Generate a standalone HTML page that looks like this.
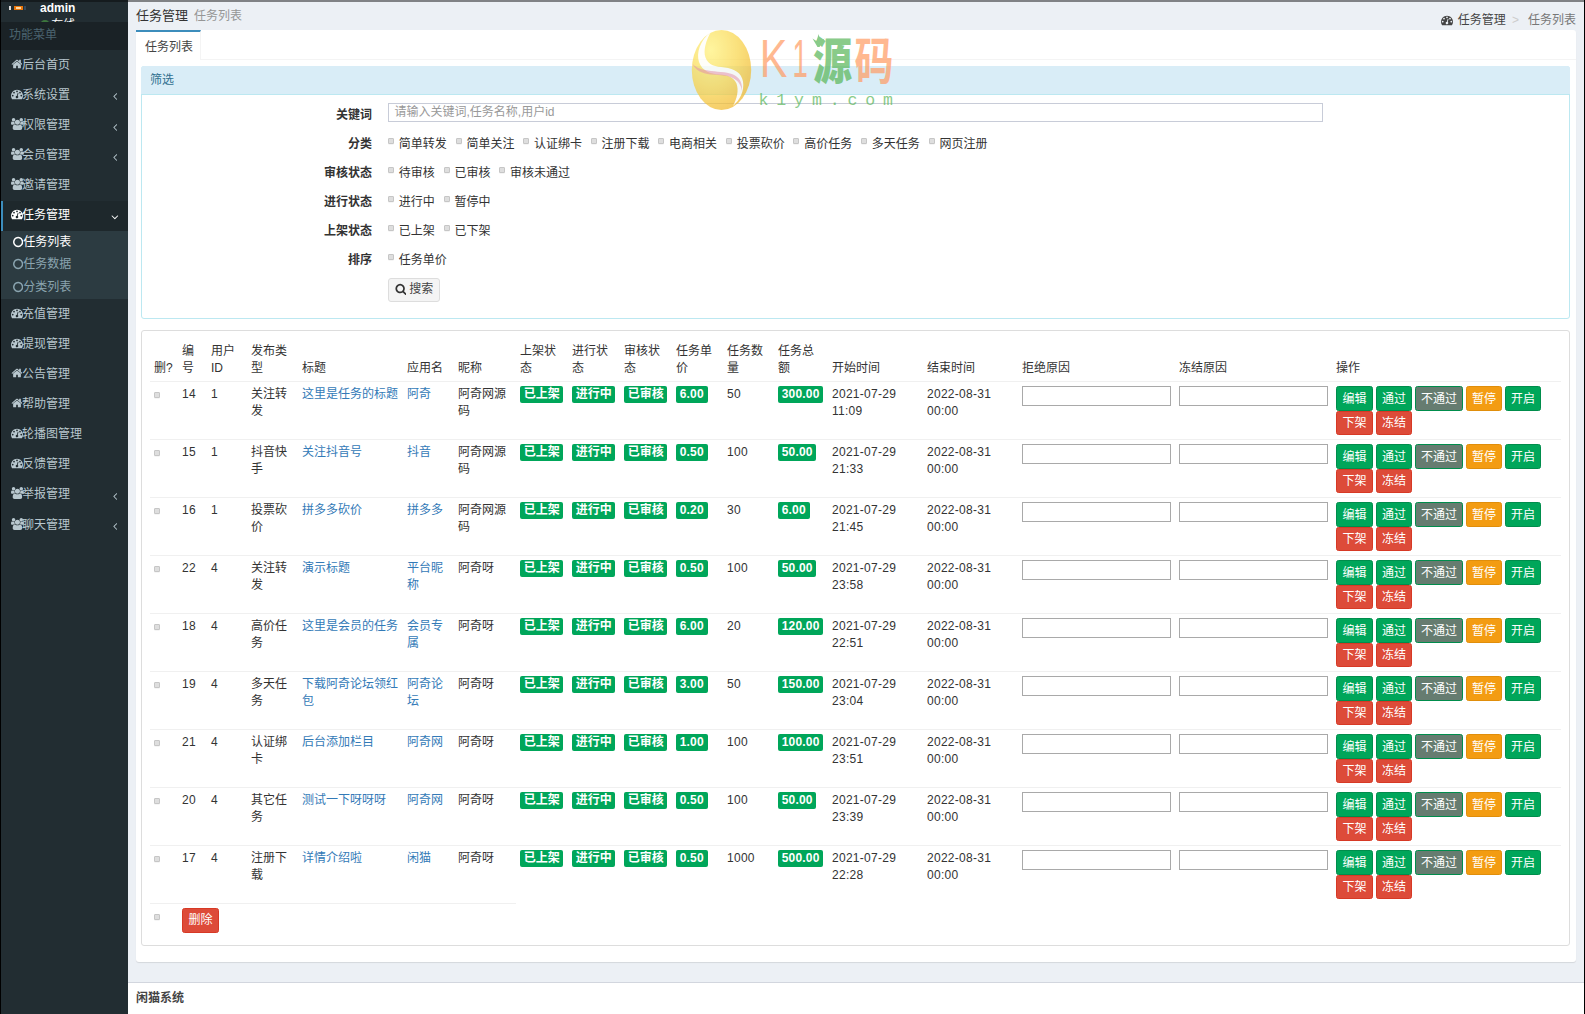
<!DOCTYPE html>
<html lang="zh-CN"><head><meta charset="utf-8"><title>任务列表</title>
<style>
*{box-sizing:border-box}
html,body{margin:0;padding:0}
body{width:1585px;height:1014px;overflow:hidden;position:relative;background:#ecf0f5;font-family:"Liberation Sans","Noto Sans CJK SC",sans-serif;font-size:12px;line-height:17px;color:#333}
a{color:#337ab7;text-decoration:none}
ul{list-style:none;margin:0;padding:0}
#topbar{position:absolute;left:0;top:0;width:1585px;height:2px;background:#808285;z-index:5}
#topbar i{display:block;width:128px;height:2px;background:#151b1e}
#edgeL{position:absolute;left:0;top:0;width:1px;height:1014px;background:#000;z-index:9}
#edgeR{position:absolute;left:1584px;top:0;width:1px;height:1014px;background:#000;z-index:9}
#side{position:absolute;left:0;top:0;width:128px;height:1014px;background:#222d32;overflow:hidden}
#user{position:absolute;left:0;top:0;width:128px;height:22px;overflow:hidden}
#user .nm{position:absolute;left:40px;top:1px;color:#fff;font-weight:bold;font-size:12px;line-height:15px}
#user .st{position:absolute;left:41px;top:17px;padding-left:10.300px;color:#fff;font-size:12px;line-height:17px;white-space:nowrap}
#user .st i{position:absolute;left:-1px;top:2.800px;width:10.300px;height:10.300px;border-radius:50%;background:#3c763d}
#user .av{position:absolute;left:9px;top:6px;width:18px;height:4px}
#mh{position:absolute;left:0;top:22px;width:128px;height:27.700px;background:#1a2226;color:#4b646f;padding:5px 0 0 9px;line-height:17px}
#menu{position:absolute;left:0;top:50.300px;width:128px}
#menu>li>a{display:block;height:30.140px;line-height:30px;color:#b8c7ce;padding-left:11px;position:relative;border-left:0 solid transparent;white-space:nowrap}
#menu>li>a span{position:relative;top:-0.500px}
#menu>li.act>a{height:30.140px}
.fa{height:1em;fill:currentColor;vertical-align:-0.143em;display:inline-block}
#menu>li>a>.fa:first-child{position:relative;top:-1.200px}
#menu .ar{position:absolute;right:11px;top:10px;color:#b8c7ce}
#menu .ar.ad{right:9px;top:10px;color:#fff}
#menu li.act>a{background:#1e282c;color:#fff;border-left:3px solid #3c8dbc;padding-left:8px}
.tv{background:#2c3b41;padding:0;height:68.160px}
.tv li{height:22.430px;line-height:22px;color:#8aa4af;padding-left:13px;white-space:nowrap}
.tv li.on{color:#fff}
#main{position:absolute;left:128px;top:0;width:1457px;height:1014px}
#ch{position:absolute;left:8px;top:6px;font-size:13px;line-height:20px;color:#333;white-space:nowrap}
#ch small{font-size:12px;color:#969696;margin-left:6px}
#bc{position:absolute;right:9px;top:11px;line-height:18px;white-space:nowrap;color:#777}
#bc .a{color:#444}
#bc .sep{color:#ccc;margin:0 9px 0 6.300px}
#card{position:absolute;left:8px;top:30px;width:1440px;height:932px;background:#fff;border-radius:3px;box-shadow:0 1px 1px rgba(0,0,0,.1)}
#tabs{position:absolute;left:0;top:0;width:1440px;height:30px;border-bottom:1px solid #f4f4f4;border-radius:3px 3px 0 0}
#tabs .t{position:absolute;left:0;top:0;width:65px;height:30px;border-top:2px solid #3c8dbc;border-right:1px solid #f4f4f4;background:#fff;color:#444;padding:6px 0 0 9px;line-height:18px}
#filt{position:absolute;left:5px;top:36px;width:1429px;height:253px;border:1px solid #bce8f1;border-radius:3px;background:#fff}
#filt .hd{height:29px;margin:-1px -1px 0 -1px;background:#d9edf7;border-bottom:1px solid #bce8f1;color:#31708f;padding:6px 0 0 9px;line-height:17px;border-radius:3px 3px 0 0}
.fr{position:absolute;left:0;width:1427px;height:20px;line-height:20px}
.fr .l{position:absolute;left:0;width:230px;text-align:right;font-weight:bold;color:#333}
.fr .c{position:absolute;left:246px;top:0;white-space:nowrap}
.cb{display:inline-block;width:6px;height:6px;border:1px solid #c6c6c6;background:#dedede;border-radius:1px;vertical-align:4px;box-shadow:0 .5px .5px rgba(0,0,0,.08)}
.cl{margin:0 8.780px 0 4.800px;color:#333;white-space:nowrap}
#kw{position:absolute;left:246px;top:36px;width:935px;height:19px;border:1px solid #c8ccd8;background:#fff;color:#999;padding:0 0 0 5.500px;line-height:17px;font-size:12px}
#sb{position:absolute;left:246px;top:211px;width:52px;height:24px;border:1px solid #ddd;background:#f4f4f4;border-radius:3px;color:#444;line-height:20px;padding-left:6px}
#tp{position:absolute;left:5px;top:300px;width:1429px;height:616px;border:1px solid #ddd;border-radius:3px;background:#fff}
table{position:absolute;left:8px;top:8px;border-collapse:collapse;table-layout:fixed;width:1411px}
th,td{padding:4px 4px 4px 4px;text-align:left;vertical-align:top;line-height:17px;font-weight:normal;color:#333;border-top:1px solid #f0f0f0}
th{vertical-align:bottom;border-top:0;border-bottom:1px solid #f0f0f0;height:42px;padding-bottom:4px}
td{height:58px;padding-top:4px;padding-bottom:4px}
.lb{display:inline-block;background:#00a65a;color:#fff;font-weight:bold;font-size:12px;line-height:17px;height:17px;padding:0 3.700px;border-radius:2px;white-space:nowrap;vertical-align:top;margin-top:0}
.ti{display:block;width:149px;height:20px;border:1px solid #a9a9a9;background:#fff;margin-top:0.200px;padding:0}
.n{letter-spacing:.27px}
.n2{letter-spacing:.2px}
.bt{display:inline-block;height:25px;line-height:24.500px;padding:0 5px;color:#fff;border:1px solid;border-radius:2.500px;margin:0 3px 0 0;vertical-align:top}
.bt.g{background:#00a65a;border-color:#008d4c}
.bt.gr{background:#667c70;border-color:#008d4c}
.bt.y{background:#f39c12;border-color:#e08e0b}
.bt.r{background:#dd4b39;border-color:#d73925}
td.op{padding-top:4px;white-space:normal;font-size:0;line-height:0}
td.op .bt{font-size:12px}
.bt.b2{height:24px;line-height:22px}
.bt.w{padding:0 5.500px}
.tc{vertical-align:0;margin-top:5px;position:relative;top:-0.500px}
#ft{position:absolute;left:0;top:982px;width:1457px;height:32px;background:#fff;border-top:1px solid #d2d6de;padding:7px 0 0 8px;font-weight:bold;color:#444;line-height:17px}
#wm{position:absolute;left:690px;top:28px;width:210px;height:86px;opacity:.72;z-index:4;pointer-events:none}
</style></head><body>
<div id="side">
 <div id="user"><svg class="av" viewBox="0 0 18 4"><rect x="0" y="0" width="2" height="4" fill="#ddd"/><rect x="5" y="0" width="9" height="4" fill="#e8760c"/><rect x="7" y="1" width="5" height="2" fill="#fbd9a8"/><rect x="15" y="0" width="2" height="4" fill="#34495e"/></svg><div class="nm">admin</div><div class="st"><i></i>在线</div></div>
 <div id="mh">功能菜单</div>
 <ul id="menu">
<li><a><svg class="fa" viewBox="0 0 1664 1792" style="width:0.9286em;margin-right:-0.143px"><path d="M1472 992v480q0 26-19 45t-45 19h-384v-384h-256v384h-384q-26 0-45-19t-19-45v-480q0-1 .5-3t.5-3l575-474 575 474q1 2 1 6zm223-69l-62 74q-8 9-21 11h-3q-13 0-21-7l-692-577-692 577q-12 8-24 7-13-2-21-11l-62-74q-8-10-7-23.500t11-21.500l719-599q32-26 76-26t76 26l244 204v-195q0-14 9-23t23-9h192q14 0 23 9t9 23v408l219 182q10 8 11 21.500t-7 23.500z"/></svg><span>后台首页</span></a></li>
<li><a><svg class="fa" viewBox="0 0 1792 1792" style="width:1.0000em;margin-right:-1px"><path d="M384 1152q0-53-37.500-90.500t-90.500-37.500-90.500 37.500-37.500 90.500 37.500 90.500 90.500 37.500 90.500-37.500 37.500-90.500zm192-448q0-53-37.500-90.500t-90.500-37.500-90.500 37.500-37.500 90.500 37.500 90.500 90.500 37.500 90.500-37.500 37.500-90.500zm428 481l101-382q6-26-7.500-48.500t-38.500-29.500-48 6.500-30 39.500l-101 382q-60 5-107 43.500t-63 98.500q-20 77 20 146t117 89 146-20 89-117q16-60-6-117t-72-91zm660-33q0-53-37.500-90.500t-90.500-37.500-90.500 37.500-37.500 90.500 37.500 90.500 90.500 37.500 90.500-37.500 37.500-90.500zm-640-640q0-53-37.500-90.500t-90.500-37.500-90.500 37.500-37.500 90.500 37.500 90.500 90.500 37.500 90.500-37.500 37.500-90.500zm448 192q0-53-37.500-90.500t-90.500-37.500-90.500 37.500-37.500 90.500 37.500 90.500 90.500 37.500 90.500-37.500 37.500-90.500zm320 448q0 261-141 483-19 29-54 29h-1402q-35 0-54-29-141-221-141-483 0-182 71-348t191-286 286-191 348-71 348 71 286 191 191 286 71 348z"/></svg><span>系统设置</span><svg class="fa ar" viewBox="0 0 640 1792" style="width:0.3571em"><path d="M627 544q0 13-10 23l-393 393 393 393q10 10 10 23t-10 23l-50 50q-10 10-23 10t-23-10l-466-466q-10-10-10-23t10-23l466-466q10-10 23-10t23 10l50 50q10 10 10 23z"/></svg></a></li>
<li><a><svg class="fa" viewBox="0 0 1920 1792" style="width:1.0714em;margin-right:-1.857px"><path d="M593 896q-162 5-265 128h-134q-82 0-138-40.500t-56-118.500q0-353 124-353 6 0 43.500 21t97.500 42.500 119 21.500q67 0 133-23-5 37-5 66 0 139 81 256zm1071 637q0 120-73 189.500t-194 69.500h-874q-121 0-194-69.500t-73-189.500q0-53 3.500-103.500t14-109 26.500-108.500 43-97.500 62-81 85.500-53.500 111.500-20q10 0 43 21.500t73 48 107 48 135 21.500 135-21.500 107-48 73-48 43-21.500q61 0 111.500 20t85.500 53.500 62 81 43 97.500 26.500 108.500 14 109 3.500 103.500zm-1024-1277q0 106-75 181t-181 75-181-75-75-181 75-181 181-75 181 75 75 181zm704 384q0 159-112.500 271.500t-271.500 112.500-271.500-112.500-112.500-271.500 112.500-271.500 271.500-112.500 271.500 112.500 112.500 271.500zm576 225q0 78-56 118.500t-138 40.500h-134q-103-123-265-128 81-117 81-256 0-29-5-66 66 23 133 23 59 0 119-21.500t97.500-42.500 43.500-21q124 0 124 353zm-128-609q0 106-75 181t-181 75-181-75-75-181 75-181 181-75 181 75 75 181z"/></svg><span>权限管理</span><svg class="fa ar" viewBox="0 0 640 1792" style="width:0.3571em"><path d="M627 544q0 13-10 23l-393 393 393 393q10 10 10 23t-10 23l-50 50q-10 10-23 10t-23-10l-466-466q-10-10-10-23t10-23l466-466q10-10 23-10t23 10l50 50q10 10 10 23z"/></svg></a></li>
<li><a><svg class="fa" viewBox="0 0 1920 1792" style="width:1.0714em;margin-right:-1.857px"><path d="M593 896q-162 5-265 128h-134q-82 0-138-40.500t-56-118.500q0-353 124-353 6 0 43.500 21t97.500 42.500 119 21.500q67 0 133-23-5 37-5 66 0 139 81 256zm1071 637q0 120-73 189.500t-194 69.500h-874q-121 0-194-69.500t-73-189.500q0-53 3.500-103.500t14-109 26.500-108.500 43-97.500 62-81 85.500-53.500 111.500-20q10 0 43 21.500t73 48 107 48 135 21.500 135-21.500 107-48 73-48 43-21.500q61 0 111.500 20t85.500 53.500 62 81 43 97.500 26.500 108.500 14 109 3.500 103.500zm-1024-1277q0 106-75 181t-181 75-181-75-75-181 75-181 181-75 181 75 75 181zm704 384q0 159-112.500 271.500t-271.500 112.500-271.500-112.500-112.500-271.500 112.500-271.500 271.500-112.500 271.500 112.500 112.500 271.500zm576 225q0 78-56 118.500t-138 40.500h-134q-103-123-265-128 81-117 81-256 0-29-5-66 66 23 133 23 59 0 119-21.500t97.500-42.500 43.500-21q124 0 124 353zm-128-609q0 106-75 181t-181 75-181-75-75-181 75-181 181-75 181 75 75 181z"/></svg><span>会员管理</span><svg class="fa ar" viewBox="0 0 640 1792" style="width:0.3571em"><path d="M627 544q0 13-10 23l-393 393 393 393q10 10 10 23t-10 23l-50 50q-10 10-23 10t-23-10l-466-466q-10-10-10-23t10-23l466-466q10-10 23-10t23 10l50 50q10 10 10 23z"/></svg></a></li>
<li><a><svg class="fa" viewBox="0 0 1920 1792" style="width:1.0714em;margin-right:-1.857px"><path d="M593 896q-162 5-265 128h-134q-82 0-138-40.500t-56-118.500q0-353 124-353 6 0 43.500 21t97.500 42.500 119 21.500q67 0 133-23-5 37-5 66 0 139 81 256zm1071 637q0 120-73 189.500t-194 69.500h-874q-121 0-194-69.500t-73-189.500q0-53 3.500-103.500t14-109 26.500-108.500 43-97.500 62-81 85.500-53.500 111.500-20q10 0 43 21.500t73 48 107 48 135 21.500 135-21.500 107-48 73-48 43-21.500q61 0 111.500 20t85.500 53.500 62 81 43 97.500 26.500 108.500 14 109 3.500 103.500zm-1024-1277q0 106-75 181t-181 75-181-75-75-181 75-181 181-75 181 75 75 181zm704 384q0 159-112.500 271.500t-271.500 112.500-271.500-112.500-112.500-271.500 112.500-271.500 271.500-112.500 271.500 112.500 112.500 271.500zm576 225q0 78-56 118.500t-138 40.500h-134q-103-123-265-128 81-117 81-256 0-29-5-66 66 23 133 23 59 0 119-21.500t97.500-42.500 43.500-21q124 0 124 353zm-128-609q0 106-75 181t-181 75-181-75-75-181 75-181 181-75 181 75 75 181z"/></svg><span>邀请管理</span></a></li>
<li class="act"><a><svg class="fa" viewBox="0 0 1792 1792" style="width:1.0000em;margin-right:-1px"><path d="M384 1152q0-53-37.500-90.500t-90.500-37.500-90.500 37.500-37.500 90.500 37.500 90.500 90.500 37.500 90.500-37.500 37.500-90.500zm192-448q0-53-37.500-90.500t-90.500-37.500-90.500 37.500-37.500 90.500 37.500 90.500 90.500 37.500 90.500-37.500 37.500-90.500zm428 481l101-382q6-26-7.500-48.500t-38.500-29.500-48 6.500-30 39.500l-101 382q-60 5-107 43.500t-63 98.500q-20 77 20 146t117 89 146-20 89-117q16-60-6-117t-72-91zm660-33q0-53-37.500-90.500t-90.500-37.500-90.500 37.500-37.500 90.500 37.500 90.500 90.500 37.500 90.500-37.500 37.500-90.500zm-640-640q0-53-37.500-90.500t-90.500-37.500-90.500 37.500-37.500 90.500 37.500 90.500 90.500 37.500 90.500-37.500 37.500-90.500zm448 192q0-53-37.500-90.500t-90.500-37.500-90.500 37.500-37.500 90.500 37.500 90.500 90.500 37.500 90.500-37.500 37.500-90.500zm320 448q0 261-141 483-19 29-54 29h-1402q-35 0-54-29-141-221-141-483 0-182 71-348t191-286 286-191 348-71 348 71 286 191 191 286 71 348z"/></svg><span>任务管理</span><svg class="fa ar ad" viewBox="0 0 1152 1792" style="width:0.6429em"><path d="M1075 736q0 13-10 23l-466 466q-10 10-23 10t-23-10l-466-466q-10-10-10-23t10-23l50-50q10-10 23-10t23 10l393 393 393-393q10-10 23-10t23 10l50 50q10 10 10 23z"/></svg></a><ul class="tv"><li class="on"><svg class="fa" viewBox="0 0 1536 1792" style="width:0.8571em"><path d="M768 352q-148 0-273 73t-198 198-73 273 73 273 198 198 273 73 273-73 198-198 73-273-73-273-198-198-273-73zm768 544q0 209-103 385.500t-279.500 279.500-385.500 103-385.500-103-279.500-279.500-103-385.500 103-385.500 279.500-279.500 385.500-103 385.500 103 279.500 279.500 103 385.500z"/></svg>任务列表</li><li><svg class="fa" viewBox="0 0 1536 1792" style="width:0.8571em"><path d="M768 352q-148 0-273 73t-198 198-73 273 73 273 198 198 273 73 273-73 198-198 73-273-73-273-198-198-273-73zm768 544q0 209-103 385.500t-279.500 279.500-385.500 103-385.500-103-279.500-279.500-103-385.500 103-385.500 279.500-279.500 385.500-103 385.500 103 279.500 279.500 103 385.500z"/></svg>任务数据</li><li><svg class="fa" viewBox="0 0 1536 1792" style="width:0.8571em"><path d="M768 352q-148 0-273 73t-198 198-73 273 73 273 198 198 273 73 273-73 198-198 73-273-73-273-198-198-273-73zm768 544q0 209-103 385.500t-279.500 279.500-385.500 103-385.500-103-279.500-279.500-103-385.500 103-385.500 279.500-279.500 385.500-103 385.500 103 279.500 279.500 103 385.500z"/></svg>分类列表</li></ul></li>
<li><a><svg class="fa" viewBox="0 0 1792 1792" style="width:1.0000em;margin-right:-1px"><path d="M384 1152q0-53-37.500-90.500t-90.500-37.500-90.500 37.500-37.500 90.500 37.500 90.500 90.500 37.500 90.500-37.500 37.500-90.500zm192-448q0-53-37.500-90.500t-90.500-37.500-90.500 37.500-37.500 90.500 37.500 90.500 90.500 37.500 90.500-37.500 37.500-90.500zm428 481l101-382q6-26-7.500-48.500t-38.500-29.500-48 6.500-30 39.500l-101 382q-60 5-107 43.500t-63 98.500q-20 77 20 146t117 89 146-20 89-117q16-60-6-117t-72-91zm660-33q0-53-37.500-90.500t-90.500-37.500-90.500 37.500-37.500 90.500 37.500 90.500 90.500 37.500 90.500-37.500 37.500-90.500zm-640-640q0-53-37.500-90.500t-90.500-37.500-90.500 37.500-37.500 90.500 37.500 90.500 90.500 37.500 90.500-37.500 37.500-90.500zm448 192q0-53-37.500-90.500t-90.500-37.500-90.500 37.500-37.500 90.500 37.500 90.500 90.500 37.500 90.500-37.500 37.500-90.500zm320 448q0 261-141 483-19 29-54 29h-1402q-35 0-54-29-141-221-141-483 0-182 71-348t191-286 286-191 348-71 348 71 286 191 191 286 71 348z"/></svg><span>充值管理</span></a></li>
<li><a><svg class="fa" viewBox="0 0 1792 1792" style="width:1.0000em;margin-right:-1px"><path d="M384 1152q0-53-37.500-90.500t-90.500-37.500-90.500 37.500-37.500 90.500 37.500 90.500 90.500 37.500 90.500-37.500 37.500-90.500zm192-448q0-53-37.500-90.500t-90.500-37.500-90.500 37.500-37.500 90.500 37.500 90.500 90.500 37.500 90.500-37.500 37.500-90.500zm428 481l101-382q6-26-7.500-48.500t-38.500-29.500-48 6.500-30 39.500l-101 382q-60 5-107 43.500t-63 98.500q-20 77 20 146t117 89 146-20 89-117q16-60-6-117t-72-91zm660-33q0-53-37.500-90.500t-90.500-37.500-90.500 37.500-37.500 90.500 37.500 90.500 90.500 37.500 90.500-37.500 37.500-90.500zm-640-640q0-53-37.500-90.500t-90.500-37.500-90.500 37.500-37.500 90.500 37.500 90.500 90.500 37.500 90.500-37.500 37.500-90.500zm448 192q0-53-37.500-90.500t-90.500-37.500-90.500 37.500-37.500 90.500 37.500 90.500 90.500 37.500 90.500-37.500 37.500-90.500zm320 448q0 261-141 483-19 29-54 29h-1402q-35 0-54-29-141-221-141-483 0-182 71-348t191-286 286-191 348-71 348 71 286 191 191 286 71 348z"/></svg><span>提现管理</span></a></li>
<li><a><svg class="fa" viewBox="0 0 1664 1792" style="width:0.9286em;margin-right:-0.143px"><path d="M1472 992v480q0 26-19 45t-45 19h-384v-384h-256v384h-384q-26 0-45-19t-19-45v-480q0-1 .5-3t.5-3l575-474 575 474q1 2 1 6zm223-69l-62 74q-8 9-21 11h-3q-13 0-21-7l-692-577-692 577q-12 8-24 7-13-2-21-11l-62-74q-8-10-7-23.500t11-21.500l719-599q32-26 76-26t76 26l244 204v-195q0-14 9-23t23-9h192q14 0 23 9t9 23v408l219 182q10 8 11 21.500t-7 23.500z"/></svg><span>公告管理</span></a></li>
<li><a><svg class="fa" viewBox="0 0 1664 1792" style="width:0.9286em;margin-right:-0.143px"><path d="M1472 992v480q0 26-19 45t-45 19h-384v-384h-256v384h-384q-26 0-45-19t-19-45v-480q0-1 .5-3t.5-3l575-474 575 474q1 2 1 6zm223-69l-62 74q-8 9-21 11h-3q-13 0-21-7l-692-577-692 577q-12 8-24 7-13-2-21-11l-62-74q-8-10-7-23.500t11-21.500l719-599q32-26 76-26t76 26l244 204v-195q0-14 9-23t23-9h192q14 0 23 9t9 23v408l219 182q10 8 11 21.500t-7 23.500z"/></svg><span>帮助管理</span></a></li>
<li><a><svg class="fa" viewBox="0 0 1792 1792" style="width:1.0000em;margin-right:-1px"><path d="M384 1152q0-53-37.500-90.500t-90.500-37.500-90.500 37.500-37.500 90.500 37.500 90.500 90.500 37.500 90.500-37.500 37.500-90.500zm192-448q0-53-37.500-90.500t-90.500-37.500-90.500 37.500-37.500 90.500 37.500 90.500 90.500 37.500 90.500-37.500 37.500-90.500zm428 481l101-382q6-26-7.500-48.500t-38.500-29.500-48 6.500-30 39.500l-101 382q-60 5-107 43.500t-63 98.500q-20 77 20 146t117 89 146-20 89-117q16-60-6-117t-72-91zm660-33q0-53-37.500-90.500t-90.500-37.500-90.500 37.500-37.500 90.500 37.500 90.500 90.500 37.500 90.500-37.500 37.500-90.500zm-640-640q0-53-37.500-90.500t-90.500-37.500-90.500 37.500-37.500 90.500 37.500 90.500 90.500 37.500 90.500-37.500 37.500-90.500zm448 192q0-53-37.500-90.500t-90.500-37.500-90.500 37.500-37.500 90.500 37.500 90.500 90.500 37.500 90.500-37.500 37.500-90.500zm320 448q0 261-141 483-19 29-54 29h-1402q-35 0-54-29-141-221-141-483 0-182 71-348t191-286 286-191 348-71 348 71 286 191 191 286 71 348z"/></svg><span>轮播图管理</span></a></li>
<li><a><svg class="fa" viewBox="0 0 1792 1792" style="width:1.0000em;margin-right:-1px"><path d="M384 1152q0-53-37.500-90.500t-90.500-37.500-90.500 37.500-37.500 90.500 37.500 90.500 90.500 37.500 90.500-37.500 37.500-90.500zm192-448q0-53-37.500-90.500t-90.500-37.500-90.500 37.500-37.500 90.500 37.500 90.500 90.500 37.500 90.500-37.500 37.500-90.500zm428 481l101-382q6-26-7.500-48.500t-38.500-29.500-48 6.500-30 39.500l-101 382q-60 5-107 43.500t-63 98.500q-20 77 20 146t117 89 146-20 89-117q16-60-6-117t-72-91zm660-33q0-53-37.500-90.500t-90.500-37.500-90.500 37.500-37.500 90.500 37.500 90.500 90.500 37.500 90.500-37.500 37.500-90.500zm-640-640q0-53-37.500-90.500t-90.500-37.500-90.500 37.500-37.500 90.500 37.500 90.500 90.500 37.500 90.500-37.500 37.500-90.500zm448 192q0-53-37.500-90.500t-90.500-37.500-90.500 37.500-37.500 90.500 37.500 90.500 90.500 37.500 90.500-37.500 37.500-90.500zm320 448q0 261-141 483-19 29-54 29h-1402q-35 0-54-29-141-221-141-483 0-182 71-348t191-286 286-191 348-71 348 71 286 191 191 286 71 348z"/></svg><span>反馈管理</span></a></li>
<li><a><svg class="fa" viewBox="0 0 1920 1792" style="width:1.0714em;margin-right:-1.857px"><path d="M593 896q-162 5-265 128h-134q-82 0-138-40.500t-56-118.500q0-353 124-353 6 0 43.500 21t97.500 42.500 119 21.500q67 0 133-23-5 37-5 66 0 139 81 256zm1071 637q0 120-73 189.500t-194 69.500h-874q-121 0-194-69.500t-73-189.500q0-53 3.500-103.500t14-109 26.500-108.500 43-97.500 62-81 85.500-53.500 111.500-20q10 0 43 21.500t73 48 107 48 135 21.500 135-21.500 107-48 73-48 43-21.500q61 0 111.500 20t85.500 53.500 62 81 43 97.500 26.500 108.500 14 109 3.500 103.500zm-1024-1277q0 106-75 181t-181 75-181-75-75-181 75-181 181-75 181 75 75 181zm704 384q0 159-112.500 271.500t-271.500 112.500-271.500-112.500-112.500-271.500 112.500-271.500 271.500-112.500 271.500 112.500 112.500 271.500zm576 225q0 78-56 118.500t-138 40.500h-134q-103-123-265-128 81-117 81-256 0-29-5-66 66 23 133 23 59 0 119-21.500t97.500-42.500 43.500-21q124 0 124 353zm-128-609q0 106-75 181t-181 75-181-75-75-181 75-181 181-75 181 75 75 181z"/></svg><span>举报管理</span><svg class="fa ar" viewBox="0 0 640 1792" style="width:0.3571em"><path d="M627 544q0 13-10 23l-393 393 393 393q10 10 10 23t-10 23l-50 50q-10 10-23 10t-23-10l-466-466q-10-10-10-23t10-23l466-466q10-10 23-10t23 10l50 50q10 10 10 23z"/></svg></a></li>
<li><a><svg class="fa" viewBox="0 0 1920 1792" style="width:1.0714em;margin-right:-1.857px"><path d="M593 896q-162 5-265 128h-134q-82 0-138-40.500t-56-118.500q0-353 124-353 6 0 43.500 21t97.500 42.500 119 21.500q67 0 133-23-5 37-5 66 0 139 81 256zm1071 637q0 120-73 189.500t-194 69.500h-874q-121 0-194-69.500t-73-189.500q0-53 3.500-103.500t14-109 26.500-108.500 43-97.500 62-81 85.500-53.500 111.500-20q10 0 43 21.500t73 48 107 48 135 21.500 135-21.500 107-48 73-48 43-21.500q61 0 111.500 20t85.500 53.500 62 81 43 97.500 26.500 108.500 14 109 3.500 103.500zm-1024-1277q0 106-75 181t-181 75-181-75-75-181 75-181 181-75 181 75 75 181zm704 384q0 159-112.500 271.500t-271.500 112.500-271.500-112.500-112.500-271.500 112.500-271.500 271.500-112.500 271.500 112.500 112.500 271.500zm576 225q0 78-56 118.500t-138 40.500h-134q-103-123-265-128 81-117 81-256 0-29-5-66 66 23 133 23 59 0 119-21.500t97.500-42.500 43.500-21q124 0 124 353zm-128-609q0 106-75 181t-181 75-181-75-75-181 75-181 181-75 181 75 75 181z"/></svg><span>聊天管理</span><svg class="fa ar" viewBox="0 0 640 1792" style="width:0.3571em"><path d="M627 544q0 13-10 23l-393 393 393 393q10 10 10 23t-10 23l-50 50q-10 10-23 10t-23-10l-466-466q-10-10-10-23t10-23l466-466q10-10 23-10t23 10l50 50q10 10 10 23z"/></svg></a></li>
 </ul>
</div>
<div id="main">
 <div id="ch">任务管理<small>任务列表</small></div>
 <div id="bc"><svg class="fa" viewBox="0 0 1792 1792" style="width:1.0000em;margin-right:5px;color:#444"><path d="M384 1152q0-53-37.500-90.500t-90.500-37.500-90.500 37.500-37.500 90.500 37.500 90.500 90.500 37.500 90.500-37.500 37.500-90.500zm192-448q0-53-37.500-90.500t-90.500-37.500-90.500 37.500-37.500 90.500 37.500 90.500 90.500 37.500 90.500-37.500 37.500-90.500zm428 481l101-382q6-26-7.500-48.500t-38.500-29.500-48 6.500-30 39.500l-101 382q-60 5-107 43.500t-63 98.500q-20 77 20 146t117 89 146-20 89-117q16-60-6-117t-72-91zm660-33q0-53-37.500-90.500t-90.500-37.500-90.500 37.500-37.500 90.500 37.500 90.500 90.500 37.500 90.500-37.500 37.500-90.500zm-640-640q0-53-37.500-90.500t-90.500-37.500-90.500 37.500-37.500 90.500 37.500 90.500 90.500 37.500 90.500-37.500 37.500-90.500zm448 192q0-53-37.500-90.500t-90.500-37.500-90.500 37.500-37.500 90.500 37.500 90.500 90.500 37.500 90.500-37.500 37.500-90.500zm320 448q0 261-141 483-19 29-54 29h-1402q-35 0-54-29-141-221-141-483 0-182 71-348t191-286 286-191 348-71 348 71 286 191 191 286 71 348z"/></svg><span class="a">任务管理</span><span class="sep">&gt;</span>任务列表</div>
 <div id="card">
  <div id="tabs"><div class="t">任务列表</div></div>
  <div id="filt">
   <div class="hd">筛选</div>
   <div class="fr" style="top:38.300px"><div class="l">关键词</div></div>
   <div id="kw">请输入关键词,任务名称,用户id</div>
   <div class="fr" style="top:67.400px"><div class="l">分类</div><div class="c"><i class="cb"></i><span class="cl">简单转发</span><i class="cb"></i><span class="cl">简单关注</span><i class="cb"></i><span class="cl">认证绑卡</span><i class="cb"></i><span class="cl">注册下载</span><i class="cb"></i><span class="cl">电商相关</span><i class="cb"></i><span class="cl">投票砍价</span><i class="cb"></i><span class="cl">高价任务</span><i class="cb"></i><span class="cl">多天任务</span><i class="cb"></i><span class="cl">网页注册</span></div></div>
   <div class="fr" style="top:96.400px"><div class="l">审核状态</div><div class="c"><i class="cb"></i><span class="cl">待审核</span><i class="cb"></i><span class="cl">已审核</span><i class="cb"></i><span class="cl">审核未通过</span></div></div>
   <div class="fr" style="top:125.400px"><div class="l">进行状态</div><div class="c"><i class="cb"></i><span class="cl">进行中</span><i class="cb"></i><span class="cl">暂停中</span></div></div>
   <div class="fr" style="top:154.400px"><div class="l">上架状态</div><div class="c"><i class="cb"></i><span class="cl">已上架</span><i class="cb"></i><span class="cl">已下架</span></div></div>
   <div class="fr" style="top:183.400px"><div class="l">排序</div><div class="c"><i class="cb"></i><span class="cl">任务单价</span></div></div>
   <div id="sb"><svg class="fa" viewBox="0 0 1664 1792" style="width:0.9286em;margin-right:3px;color:#333"><path d="M1216 832q0-185-131.500-316.500t-316.500-131.500-316.500 131.500-131.500 316.500 131.500 316.500 316.500 131.500 316.500-131.500 131.500-316.500zm512 832q0 52-38 90t-90 38q-54 0-90-38l-343-342q-179 124-399 124-143 0-273.500-55.500t-225-150-150-225-55.500-273.500 55.500-273.500 150-225 225-150 273.500-55.500 273.500 55.500 225 150 150 225 55.500 273.500q0 220-124 399l343 343q37 37 37 90z"/></svg>搜索</div>
  </div>
  <div id="tp">
   <table>
    <colgroup><col style="width:28px"><col style="width:29px"><col style="width:40px"><col style="width:51px"><col style="width:105px"><col style="width:51px"><col style="width:62px"><col style="width:52px"><col style="width:52px"><col style="width:52px"><col style="width:51px"><col style="width:51px"><col style="width:54px"><col style="width:95px"><col style="width:95px"><col style="width:157px"><col style="width:157px"><col></colgroup>
    <tr><th>删?</th><th>编号</th><th>用户ID</th><th>发布类型</th><th>标题</th><th>应用名</th><th>昵称</th><th>上架状态</th><th>进行状态</th><th>审核状态</th><th>任务单价</th><th>任务数量</th><th>任务总额</th><th>开始时间</th><th>结束时间</th><th>拒绝原因</th><th>冻结原因</th><th>操作</th></tr>
<tr><td><i class="cb tc"></i></td><td class="n">14</td><td class="n">1</td><td>关注转发</td><td><a>这里是任务的标题</a></td><td><a>阿奇</a></td><td>阿奇网源码</td><td><b class="lb">已上架</b></td><td><b class="lb">进行中</b></td><td><b class="lb">已审核</b></td><td><b class="lb n2">6.00</b></td><td class="n">50</td><td><b class="lb n2">300.00</b></td><td class="n">2021-07-29 11:09</td><td class="n">2022-08-31 00:00</td><td><input class="ti"></td><td><input class="ti"></td><td class="op"><a class="bt g w">编辑</a><a class="bt g">通过</a><a class="bt gr">不通过</a><a class="bt y">暂停</a><a class="bt g">开启</a><a class="bt r b2 w">下架</a><a class="bt r b2">冻结</a></td></tr>
<tr><td><i class="cb tc"></i></td><td class="n">15</td><td class="n">1</td><td>抖音快手</td><td><a>关注抖音号</a></td><td><a>抖音</a></td><td>阿奇网源码</td><td><b class="lb">已上架</b></td><td><b class="lb">进行中</b></td><td><b class="lb">已审核</b></td><td><b class="lb n2">0.50</b></td><td class="n">100</td><td><b class="lb n2">50.00</b></td><td class="n">2021-07-29 21:33</td><td class="n">2022-08-31 00:00</td><td><input class="ti"></td><td><input class="ti"></td><td class="op"><a class="bt g w">编辑</a><a class="bt g">通过</a><a class="bt gr">不通过</a><a class="bt y">暂停</a><a class="bt g">开启</a><a class="bt r b2 w">下架</a><a class="bt r b2">冻结</a></td></tr>
<tr><td><i class="cb tc"></i></td><td class="n">16</td><td class="n">1</td><td>投票砍价</td><td><a>拼多多砍价</a></td><td><a>拼多多</a></td><td>阿奇网源码</td><td><b class="lb">已上架</b></td><td><b class="lb">进行中</b></td><td><b class="lb">已审核</b></td><td><b class="lb n2">0.20</b></td><td class="n">30</td><td><b class="lb n2">6.00</b></td><td class="n">2021-07-29 21:45</td><td class="n">2022-08-31 00:00</td><td><input class="ti"></td><td><input class="ti"></td><td class="op"><a class="bt g w">编辑</a><a class="bt g">通过</a><a class="bt gr">不通过</a><a class="bt y">暂停</a><a class="bt g">开启</a><a class="bt r b2 w">下架</a><a class="bt r b2">冻结</a></td></tr>
<tr><td><i class="cb tc"></i></td><td class="n">22</td><td class="n">4</td><td>关注转发</td><td><a>演示标题</a></td><td><a>平台昵称</a></td><td>阿奇呀</td><td><b class="lb">已上架</b></td><td><b class="lb">进行中</b></td><td><b class="lb">已审核</b></td><td><b class="lb n2">0.50</b></td><td class="n">100</td><td><b class="lb n2">50.00</b></td><td class="n">2021-07-29 23:58</td><td class="n">2022-08-31 00:00</td><td><input class="ti"></td><td><input class="ti"></td><td class="op"><a class="bt g w">编辑</a><a class="bt g">通过</a><a class="bt gr">不通过</a><a class="bt y">暂停</a><a class="bt g">开启</a><a class="bt r b2 w">下架</a><a class="bt r b2">冻结</a></td></tr>
<tr><td><i class="cb tc"></i></td><td class="n">18</td><td class="n">4</td><td>高价任务</td><td><a>这里是会员的任务</a></td><td><a>会员专属</a></td><td>阿奇呀</td><td><b class="lb">已上架</b></td><td><b class="lb">进行中</b></td><td><b class="lb">已审核</b></td><td><b class="lb n2">6.00</b></td><td class="n">20</td><td><b class="lb n2">120.00</b></td><td class="n">2021-07-29 22:51</td><td class="n">2022-08-31 00:00</td><td><input class="ti"></td><td><input class="ti"></td><td class="op"><a class="bt g w">编辑</a><a class="bt g">通过</a><a class="bt gr">不通过</a><a class="bt y">暂停</a><a class="bt g">开启</a><a class="bt r b2 w">下架</a><a class="bt r b2">冻结</a></td></tr>
<tr><td><i class="cb tc"></i></td><td class="n">19</td><td class="n">4</td><td>多天任务</td><td><a>下载阿奇论坛领红包</a></td><td><a>阿奇论坛</a></td><td>阿奇呀</td><td><b class="lb">已上架</b></td><td><b class="lb">进行中</b></td><td><b class="lb">已审核</b></td><td><b class="lb n2">3.00</b></td><td class="n">50</td><td><b class="lb n2">150.00</b></td><td class="n">2021-07-29 23:04</td><td class="n">2022-08-31 00:00</td><td><input class="ti"></td><td><input class="ti"></td><td class="op"><a class="bt g w">编辑</a><a class="bt g">通过</a><a class="bt gr">不通过</a><a class="bt y">暂停</a><a class="bt g">开启</a><a class="bt r b2 w">下架</a><a class="bt r b2">冻结</a></td></tr>
<tr><td><i class="cb tc"></i></td><td class="n">21</td><td class="n">4</td><td>认证绑卡</td><td><a>后台添加栏目</a></td><td><a>阿奇网</a></td><td>阿奇呀</td><td><b class="lb">已上架</b></td><td><b class="lb">进行中</b></td><td><b class="lb">已审核</b></td><td><b class="lb n2">1.00</b></td><td class="n">100</td><td><b class="lb n2">100.00</b></td><td class="n">2021-07-29 23:51</td><td class="n">2022-08-31 00:00</td><td><input class="ti"></td><td><input class="ti"></td><td class="op"><a class="bt g w">编辑</a><a class="bt g">通过</a><a class="bt gr">不通过</a><a class="bt y">暂停</a><a class="bt g">开启</a><a class="bt r b2 w">下架</a><a class="bt r b2">冻结</a></td></tr>
<tr><td><i class="cb tc"></i></td><td class="n">20</td><td class="n">4</td><td>其它任务</td><td><a>测试一下呀呀呀</a></td><td><a>阿奇网</a></td><td>阿奇呀</td><td><b class="lb">已上架</b></td><td><b class="lb">进行中</b></td><td><b class="lb">已审核</b></td><td><b class="lb n2">0.50</b></td><td class="n">100</td><td><b class="lb n2">50.00</b></td><td class="n">2021-07-29 23:39</td><td class="n">2022-08-31 00:00</td><td><input class="ti"></td><td><input class="ti"></td><td class="op"><a class="bt g w">编辑</a><a class="bt g">通过</a><a class="bt gr">不通过</a><a class="bt y">暂停</a><a class="bt g">开启</a><a class="bt r b2 w">下架</a><a class="bt r b2">冻结</a></td></tr>
<tr><td><i class="cb tc"></i></td><td class="n">17</td><td class="n">4</td><td>注册下载</td><td><a>详情介绍啦</a></td><td><a>闲猫</a></td><td>阿奇呀</td><td><b class="lb">已上架</b></td><td><b class="lb">进行中</b></td><td><b class="lb">已审核</b></td><td><b class="lb n2">0.50</b></td><td class="n">1000</td><td><b class="lb n2">500.00</b></td><td class="n">2021-07-29 22:28</td><td class="n">2022-08-31 00:00</td><td><input class="ti"></td><td><input class="ti"></td><td class="op"><a class="bt g w">编辑</a><a class="bt g">通过</a><a class="bt gr">不通过</a><a class="bt y">暂停</a><a class="bt g">开启</a><a class="bt r b2 w">下架</a><a class="bt r b2">冻结</a></td></tr>
    <tr class="last"><td style="height:36px"><i class="cb tc"></i></td><td colspan="6" style="height:36px;padding-top:4px"><a class="bt r b2" style="padding:0 5.500px;height:24.500px">删除</a></td></tr>
   </table>
  </div>
 </div>
 <div id="ft">闲猫系统</div>
</div>
<svg id="wm" viewBox="690 28 210 86"><defs><radialGradient id="yg" cx="32%" cy="25%" r="85%"><stop offset="0" stop-color="#fff27a"/><stop offset=".55" stop-color="#f9d54a"/><stop offset="1" stop-color="#f0b429"/></radialGradient></defs>
<ellipse cx="721.500" cy="70" rx="29.700" ry="40" fill="url(#yg)"/>
<path d="M711 32C700 40 696 53 699 62c3 9 11.500 12 20.500 12.500 9 .5 14.500 3 17 9 2.500 7 .5 15-3.500 22.500 7-6 11.500-15 10-24.500-1.500-8.500-8.500-13-18.500-14-9-1-16-2-19-10-2.500-7 .5-17.500 5.500-25.500z" fill="#fff" opacity=".95"/>
<path d="M692.500 64c3 6 9 9.500 18 10.500 10 1 18 .5 24 4.500 5 3 7 8 7.500 12 .5-6-1-12-7-15.500-6-3.500-15-3.500-24-4.500-8-1-14-2.500-18.500-7z" fill="#e8708c" opacity=".55"/>
<g transform="translate(759.800,77) scale(.78,1)"><text x="0" y="0" font-family="Liberation Sans,sans-serif" font-size="53" fill="#ff9e66">K</text></g>
<g transform="translate(792.500,77) scale(.52,1)"><text x="0" y="0" font-family="Liberation Sans,sans-serif" font-size="53" fill="#ff9e66">1</text></g>
<g transform="translate(813,79.300) scale(1,1.270)"><text x="0" y="0" font-family="Noto Sans CJK SC,sans-serif" font-weight="900" font-size="39" fill="#5cb85c">源</text></g>
<g transform="translate(854.500,79.300) scale(1,1.270)"><text x="0" y="0" font-family="Noto Sans CJK SC,sans-serif" font-weight="700" font-size="39" fill="#ff9e66">码</text></g>
<path d="M817.500 47l-5-8.500 4.200 2.800 1.800-7.300 1.800 7.300 4.200-2.800-5 8.500z" fill="#5cb85c"/>
<text x="758.500" y="104.700" font-family="Liberation Mono,monospace" font-size="16.500" fill="#5cb85c" letter-spacing="7.900">k1ym.com</text>
</svg>
<div id="topbar"><i></i></div><div id="edgeL"></div><div id="edgeR"></div>
</body></html>
